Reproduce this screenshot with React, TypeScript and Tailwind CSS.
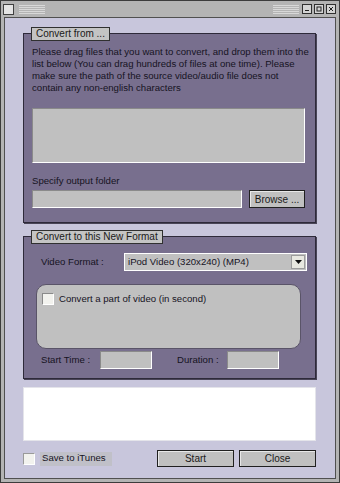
import React from 'react';

const font = { fontFamily: '"Liberation Sans", Arial, sans-serif' };

function Grip() {
  return (
    <div className="flex flex-col gap-[1px] w-[26px]">
      {[0, 1, 2, 3, 4].map((i) => (
        <div key={i} className="h-[1px] bg-[#8c8c8c] border-b border-[#d8d8d8]" />
      ))}
    </div>
  );
}

function TitleButton({ kind }: { kind: 'min' | 'max' | 'close' }) {
  return (
    <div className="w-[10px] h-[10px] border border-[#303030] bg-[#d4d4d4] flex items-center justify-center">
      <svg width="8" height="8" viewBox="0 0 8 8">
        {kind === 'min' && <rect x="2" y="5" width="4" height="1" fill="#202020" />}
        {kind === 'max' && <rect x="2" y="2" width="4" height="4" fill="none" stroke="#202020" strokeWidth="1" />}
        {kind === 'close' && <path d="M2 2 L6 6 M6 2 L2 6" stroke="#202020" strokeWidth="1" />}
      </svg>
    </div>
  );
}

function Legend({ children }: { children: React.ReactNode }) {
  return (
    <div className="relative z-10 ml-[8px] w-fit h-[14px] px-[4px] bg-[#c4c4c4] border border-[#303030] text-[10px] leading-[12px] text-[#1a1a1a] whitespace-nowrap">
      {children}
    </div>
  );
}

function Sunken({ className }: { className: string }) {
  return <div className={`bg-[#c0c0c0] border border-t-[#8a8a8a] border-l-[#8a8a8a] border-r-white border-b-white ${className}`} />;
}

function Button({ children, className }: { children: React.ReactNode; className: string }) {
  return (
    <div className={`h-[17px] bg-[#c0c0c0] border border-[#202020] shadow-[inset_1px_1px_0_#e8e8e8] flex items-center justify-center text-[10px] text-[#1a1a1a] ${className}`}>
      {children}
    </div>
  );
}

export default function App() {
  return (
    <div style={font} className="w-[340px] h-[483px] bg-[#b4b4b4] border border-[#3c3c3c] flex flex-col overflow-hidden">
      {/* Title bar */}
      <div className="h-[16px] flex items-center pl-[2px] pr-[3px]">
        <div className="w-[11px] h-[11px] border border-[#404040] bg-[#e4e4e4]" />
        <div className="ml-[5px]"><Grip /></div>
        <div className="flex-1" />
        <Grip />
        <div className="ml-[3px] flex gap-[2px]">
          <TitleButton kind="min" />
          <TitleButton kind="max" />
          <TitleButton kind="close" />
        </div>
      </div>

      {/* Client */}
      <div className="flex-1 mx-[3px] mb-[3px] border border-[#505050] bg-[#c8c6dc] pl-[18px] pr-[19px] pt-[9px] flex flex-col text-[#1e1b2a]">
        {/* Convert from */}
        <Legend>Convert from ...</Legend>
        <div className="-mt-[8px] bg-[#786f8e] border border-[#2e2a3a] shadow-[1px_1px_0_#4a4558] pt-[12px] pl-[8px] pr-[10px] pb-[14px] flex flex-col">
          <div className="text-[9.6px] leading-[12px] text-[#16131f] whitespace-nowrap">
            <div>Please drag files that you want to convert, and drop them into the</div>
            <div>list below (You can drag hundreds of files at one time). Please</div>
            <div>make sure the path of the source video/audio file does not</div>
            <div>contain any non-english characters</div>
          </div>
          <Sunken className="mt-[14px] h-[55px]" />
          <div className="mt-[12px] text-[9.6px] leading-[12px] text-[#16131f]">Specify output folder</div>
          <div className="mt-[3px] flex items-center">
            <Sunken className="w-[210px] h-[18px]" />
            <div className="flex-1" />
            <Button className="w-[56px] h-[18px]">Browse ...</Button>
          </div>
        </div>

        {/* Convert to */}
        <div className="mt-[7px]"><Legend>Convert to this New Format</Legend></div>
        <div className="-mt-[8px] bg-[#786f8e] border border-[#2e2a3a] shadow-[1px_1px_0_#4a4558] pt-[16px] pl-[12px] pr-[8px] pb-[9px] flex flex-col">
          <div className="flex items-center h-[18px]">
            <div className="w-[88px] pl-[5px] text-[9.6px] text-[#16131f]">Video Format :</div>
            <div className="flex-1 h-[18px] bg-[#c0c0c0] border border-white flex items-center pl-[3px] pr-[1px]">
              <span className="flex-1 text-[9.6px] text-[#16131f]">iPod Video (320x240) (MP4)</span>
              <div className="w-[14px] h-[14px] bg-[#e8e8e0] border border-[#9c9c9c] flex items-center justify-center">
                <svg width="7" height="4" viewBox="0 0 7 4"><path d="M0 0 H7 L3.5 4 Z" fill="#101010" /></svg>
              </div>
            </div>
          </div>
          <div className="mt-[13px] mr-[6px] h-[65px] bg-[#c0c0c0] border border-[#5a5468] rounded-[10px] pt-[7px] pl-[5px]">
            <div className="flex items-center gap-[5px]">
              <div className="w-[12px] h-[12px] bg-[#f2f2ee] border border-t-[#8a8a8a] border-l-[#8a8a8a] border-r-white border-b-white" />
              <span className="text-[9.6px] text-[#16131f]">Convert a part of video (in second)</span>
            </div>
          </div>
          <div className="mt-[2px] flex items-center h-[18px] text-[9.6px] text-[#16131f]">
            <div className="w-[64px] pl-[5px]">Start Time :</div>
            <Sunken className="w-[52px] h-[18px]" />
            <div className="w-[75px] pl-[25px]">Duration :</div>
            <Sunken className="w-[52px] h-[18px]" />
          </div>
        </div>

        {/* Log */}
        <div className="mt-[8px] h-[54px] bg-white border border-[#e4e4ea]" />

        {/* Bottom row */}
        <div className="mt-[9px] flex items-center h-[17px]">
          <div className="w-[12px] h-[12px] bg-[#f2f2ee] border border-t-[#9a9a9a] border-l-[#9a9a9a] border-r-white border-b-white" />
          <div className="ml-[5px] h-[14px] w-[72px] bg-[#c0c0c8] pl-[2px] flex items-center text-[9.6px] text-[#16131f] whitespace-nowrap">Save to iTunes</div>
          <div className="flex-1" />
          <Button className="w-[77px]">Start</Button>
          <Button className="ml-[5px] w-[77px]">Close</Button>
        </div>
      </div>
    </div>
  );
}
